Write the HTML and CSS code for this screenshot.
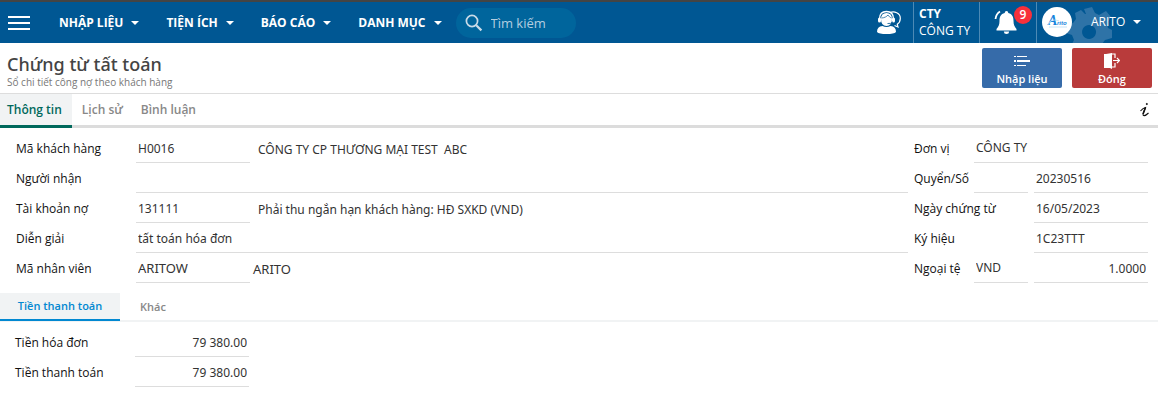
FILE: index.html
```html
<!DOCTYPE html>
<html lang="vi">
<head>
<meta charset="utf-8">
<meta name="viewport" content="width=device-width, initial-scale=1">
<title>Chứng từ tất toán</title>
<link rel="stylesheet" href="styles.css">
</head>
<body>
<header class="topbar">
  <button class="burger" type="button" aria-label="Menu"><span></span><span></span><span></span></button>
  <nav class="menu">
    <button class="menu-item" type="button">NHẬP LIỆU<i class="caret"></i></button>
    <button class="menu-item" type="button">TIỆN ÍCH<i class="caret"></i></button>
    <button class="menu-item" type="button">BÁO CÁO<i class="caret"></i></button>
    <button class="menu-item" type="button">DANH MỤC<i class="caret"></i></button>
  </nav>
  <label class="search">
    <svg width="18" height="18" viewBox="0 0 18 18" fill="none" stroke="currentColor"><circle cx="7" cy="7" r="5.6" stroke-width="1.7"/><path d="M11.2 11.2L16.4 16.4" stroke-width="2.2"/></svg>
    <input type="text" placeholder="Tìm kiếm" aria-label="Tìm kiếm">
  </label>
  <div class="tools">
    <button class="support" type="button" aria-label="Hỗ trợ">
      <svg width="26" height="26" viewBox="0 0 26 26"><path d="M14 2.500C18 1 24.500 2.500 24.300 8.500C24.200 11.500 22.500 13.500 21.300 14.300L22 17L18.500 15.500" fill="none" stroke="#fff" stroke-width="1.200"/><path d="M5 9Q5 3 10.500 3T16 9Q16 16 10.500 16T5 9Z" fill="#fff"/><path d="M3.500 9C3.500 3.500 6.500 1.500 10.500 1.500S17.500 3.500 17.500 9" fill="none" stroke="#fff" stroke-width="1.300"/><path d="M5.500 8C8 8 11 6.500 12 5C13 6.500 14 7.500 15.500 8" fill="none" stroke="#005793" stroke-width=".7"/><rect x="2" y="7.500" width="3" height="5" rx="1.500" fill="#fff"/><rect x="16" y="7.500" width="3" height="5" rx="1.500" fill="#fff"/><path d="M16.500 12Q15 14 11.500 13.500" fill="none" stroke="#005793" stroke-width=".8"/><path d="M1 22Q1 16.500 6.500 16Q10.500 18 14.500 16Q20 16.500 20 22Q18 24 10.500 24T1 22Z" fill="#fff"/></svg>
    </button>
    <div class="company"><b>CTY</b><span>CÔNG TY</span></div>
    <button class="bell" type="button" aria-label="Thông báo">
      <svg width="26" height="26" viewBox="0 0 26 26" fill="#fff"><path d="M11.700 4Q11.700 2 13.500 2T15.300 4C19.500 5 20.500 8 20.500 12C20.500 16 21.500 17.500 23.500 20V21.500H3.500V20C5.500 17.500 6.500 16 6.500 12C6.500 8 7.500 5 11.700 4ZM10.800 22.500H16.200Q16 25 13.500 25T10.800 22.500Z"/><path d="M7 2.500Q3 5 2.500 10" fill="none" stroke="#fff" stroke-width="1.800"/></svg>
      <span class="badge">9</span>
    </button>
    <button class="account" type="button">
      <svg class="gear" width="46" height="46" viewBox="0 0 46 46" fill="#2e73a7"><path fill-rule="evenodd" d="M18 3L26 1L29 7L33 9L40 5L45 11L41 17L42 22L46 24V32L39 34L36 38V46H28L24 41H18L14 46H6L5 40L8 34L6 29L0 27V19L7 17L10 13L9 7L15 4L19 8L20 8ZM23 19a7 7 0 1 0 .1 0Z"/></svg>
      <svg class="avatar" width="30" height="30" viewBox="0 0 30 30"><circle cx="15" cy="15" r="15" fill="#fff"/><text x="6" y="18" class="logo-a">A</text><text x="15" y="18" class="logo-b">rito</text><path d="M6 18C8 13 12 12 17 14M7 20H25" fill="none" stroke="#b8dcf5" stroke-width=".8"/></svg>
      <span>ARITO</span><i class="caret"></i>
    </button>
  </div>
</header>
<main>
  <section class="heading">
    <div><h1>Chứng từ tất toán</h1><p>Sổ chi tiết công nợ theo khách hàng</p></div>
    <div class="actions">
      <button class="action blue" type="button"><svg width="16" height="16" viewBox="0 0 16 16" fill="#fff"><path d="M0 3h2v1H0zM3 3h10v1H3zM0 7h2v2H0zM3 7h13v2H3zM0 12h2v1H0zM3 12h9v1H3z"/></svg>Nhập liệu</button>
      <button class="action red" type="button"><svg width="16" height="16" viewBox="0 0 16 16"><path d="M0 1H2L8 0V16L6 15H0Z" fill="#fff"/><path d="M7 1H11V5M11 10V14H8M9 7.500H15.500M13 5L15.500 7.500L13 10" fill="none" stroke="#fff" stroke-width="1.200"/></svg>Đóng</button>
    </div>
  </section>
  <nav class="tabs" role="tablist">
    <button type="button" role="tab" aria-selected="true">Thông tin</button>
    <button type="button" role="tab">Lịch sử</button>
    <button type="button" role="tab">Bình luận</button>
    <button class="info" type="button" aria-label="Thông tin thêm"><svg width="12" height="16" viewBox="0 0 12 16" fill="none" stroke="#111"><path d="M1.500 9Q4 6 6.500 5.500C5.500 8.500 3 13 4.500 13.500C6 14 8 12.500 9.500 11" stroke-width="1.100"/><path d="M6.500 5.500L4 12" stroke-width="1.600"/><circle cx="7.800" cy="2" r=".6" fill="#111"/></svg></button>
  </nav>
  <form class="form">
    <div class="left">
      <div class="row"><label for="kh">Mã khách hàng</label><input class="code" id="kh" value="H0016"><output class="name">CÔNG TY CP THƯƠNG MẠI TEST&nbsp; ABC</output></div>
      <div class="row"><label for="nn">Người nhận</label><input class="wide" id="nn"></div>
      <div class="row"><label for="tk">Tài khoản nợ</label><input class="code" id="tk" value="131111"><output class="name">Phải thu ngắn hạn khách hàng: HĐ SXKD (VND)</output></div>
      <div class="row"><label for="dg">Diễn giải</label><input class="wide" id="dg" value="tất toán hóa đơn"></div>
      <div class="row staff"><label for="nv">Mã nhân viên</label><input class="code" id="nv" value="ARITOW"><output class="name">ARITO</output></div>
    </div>
    <div class="right">
      <div class="row"><label for="dv">Đơn vị</label><input class="raised wide" id="dv" value="CÔNG TY"></div>
      <div class="row"><label for="so">Quyển/Số</label><input class="short" aria-label="Quyển"><input class="wide" id="so" value="20230516"></div>
      <div class="row long"><label for="ng">Ngày chứng từ</label><input class="wide" id="ng" value="16/05/2023"></div>
      <div class="row long"><label for="ky">Ký hiệu</label><input class="wide" id="ky" value="1C23TTT"></div>
      <div class="row"><label for="nt">Ngoại tệ</label><input class="short raised" id="nt" value="VND"><input class="wide num" aria-label="Tỷ giá" value="1.0000"></div>
    </div>
  </form>
  <nav class="subtabs" role="tablist">
    <button type="button" role="tab" aria-selected="true">Tiền thanh toán</button>
    <button type="button" role="tab">Khác</button>
  </nav>
  <form class="totals">
    <div class="row"><label for="hd">Tiền hóa đơn</label><input class="code num" id="hd" value="79 380.00"></div>
    <div class="row"><label for="tt">Tiền thanh toán</label><input class="code num" id="tt" value="79 380.00"></div>
  </form>
</main>
</body>
</html>
```
FILE: styles.css
```css
* { box-sizing: border-box; }
body { margin: 0; background: #fff; color: #333; font: 12px/16px "Open Sans", "Noto Sans", sans-serif; }
button, input { font: inherit; color: inherit; border: 0; padding: 0; margin: 0; background: none; }
input { min-width: 0; outline: 0; }
svg { display: block; flex: none; }

.topbar { display: flex; align-items: center; height: 43px; border-top: 2px solid #444; background: #005793; color: #fff; }
.burger { display: grid; gap: 4px; width: 22px; margin-left: 8px; }
.burger span { height: 2px; background: #fff; }
.menu { display: flex; gap: 27px; margin-left: 29px; }
.menu-item { display: flex; align-items: center; gap: 8px; font-weight: 700; white-space: nowrap; }
.caret { border: 4px solid transparent; border-top-color: #fff; border-bottom: 0; }
.search { display: flex; align-items: center; gap: 8px; width: 120px; height: 30px; margin-left: 14px; padding-left: 9px; border-radius: 15px; background: #00659c; color: #c9dbe8; }
.search input { width: 76px; font-size: 13px; }
.search input::placeholder { color: #b3cee0; opacity: 1; }
.tools { display: flex; align-self: stretch; margin-left: auto; }
.support { width: 37px; }
.company { display: flex; flex-direction: column; justify-content: center; width: 66px; padding: 0 0 2px 5px; border-left: 1px solid #4d8ab5; line-height: 17px; white-space: nowrap; }
.bell { position: relative; width: 57px; padding: 0 0 2px 13px; border-left: 1px solid #4d8ab5; }
.badge { position: absolute; top: 4px; left: 34px; width: 18px; height: 18px; border-radius: 9px; background: #f8303a; font-weight: 600; line-height: 18px; }
.account { position: relative; display: flex; align-items: center; gap: 8px; width: 122px; padding: 0 0 2px 5px; border-left: 1px solid #4d8ab5; overflow: hidden; }
.account span { position: relative; margin-left: 11px; }
.avatar { position: relative; }
.gear { position: absolute; left: 29px; top: 4px; }
.logo-a { font: italic 700 14px "Liberation Serif", serif; fill: #1683dc; }
.logo-b { font: italic 700 6px "Liberation Sans", sans-serif; fill: #1683dc; }

.heading { display: flex; justify-content: space-between; height: 51px; padding: 5px 6px 0 7px; border-bottom: 1px solid #ddd; }
h1 { margin: 4px 0 0; font: 500 18px/24px "Noto Sans", sans-serif; color: #444; }
.heading p { margin: 0; font-size: 10px; line-height: 12px; color: #777; }
.actions { display: flex; gap: 10px; }
.action { display: flex; flex-direction: column; align-items: center; gap: 2px; width: 80px; height: 40px; padding-top: 5px; border-radius: 2px; color: #fff; font-size: 11px; font-weight: 600; }
.blue { background: #366ba9; }
.red { background: #b93b3b; }
.tabs { display: flex; height: 34px; border-bottom: 3px solid #dcdcdc; }
.tabs button { height: 34px; padding: 0 0 3px; margin-right: 18px; color: #888; font-weight: 600; }
.tabs [aria-selected] { margin-right: 10px; padding: 0 10px 0 7px; border-bottom: 3px solid #00695c; background: #f1f3f4; color: #00695c; }
.tabs .info { margin: 0 7px 0 auto; }

.form { display: flex; gap: 6px; padding: 6px 10px 0 16px; }
.left { flex: 1; }
.right { width: 234px; }
.row { display: flex; height: 30px; }
.row label { flex: none; width: 120px; padding-top: 7px; color: #111; white-space: nowrap; }
.row input { height: 29px; padding: 0 2px; border-bottom: 1px solid #ddd; font-family: "Noto Sans", sans-serif; }
.row .code { width: 114px; }
.row .wide { flex: 1; }
.row .name { padding: 8px 0 0 8px; font-family: "Noto Sans", sans-serif; white-space: nowrap; }
.row .short { width: 54px; margin-right: 6px; }
.row .num { text-align: right; }
.row .raised { padding-bottom: 2px; }
.right .row label { width: 60px; }
.right .long label { width: 120px; }
.staff input, .staff output { font-size: 13px; }
.row.staff .name { padding: 7px 0 0 3px; }
.subtabs { display: flex; gap: 20px; height: 29px; margin-top: 9px; border-bottom: 2px solid #f1f3f4; }
.subtabs button { height: 27px; color: #888; font-size: 11px; font-weight: 600; }
.subtabs [aria-selected] { height: 28px; width: 120px; border-bottom: 2px solid #0288d1; background: #f1f3f4; color: #0288d1; }
.totals { padding: 6px 0 0 15px; }
```
